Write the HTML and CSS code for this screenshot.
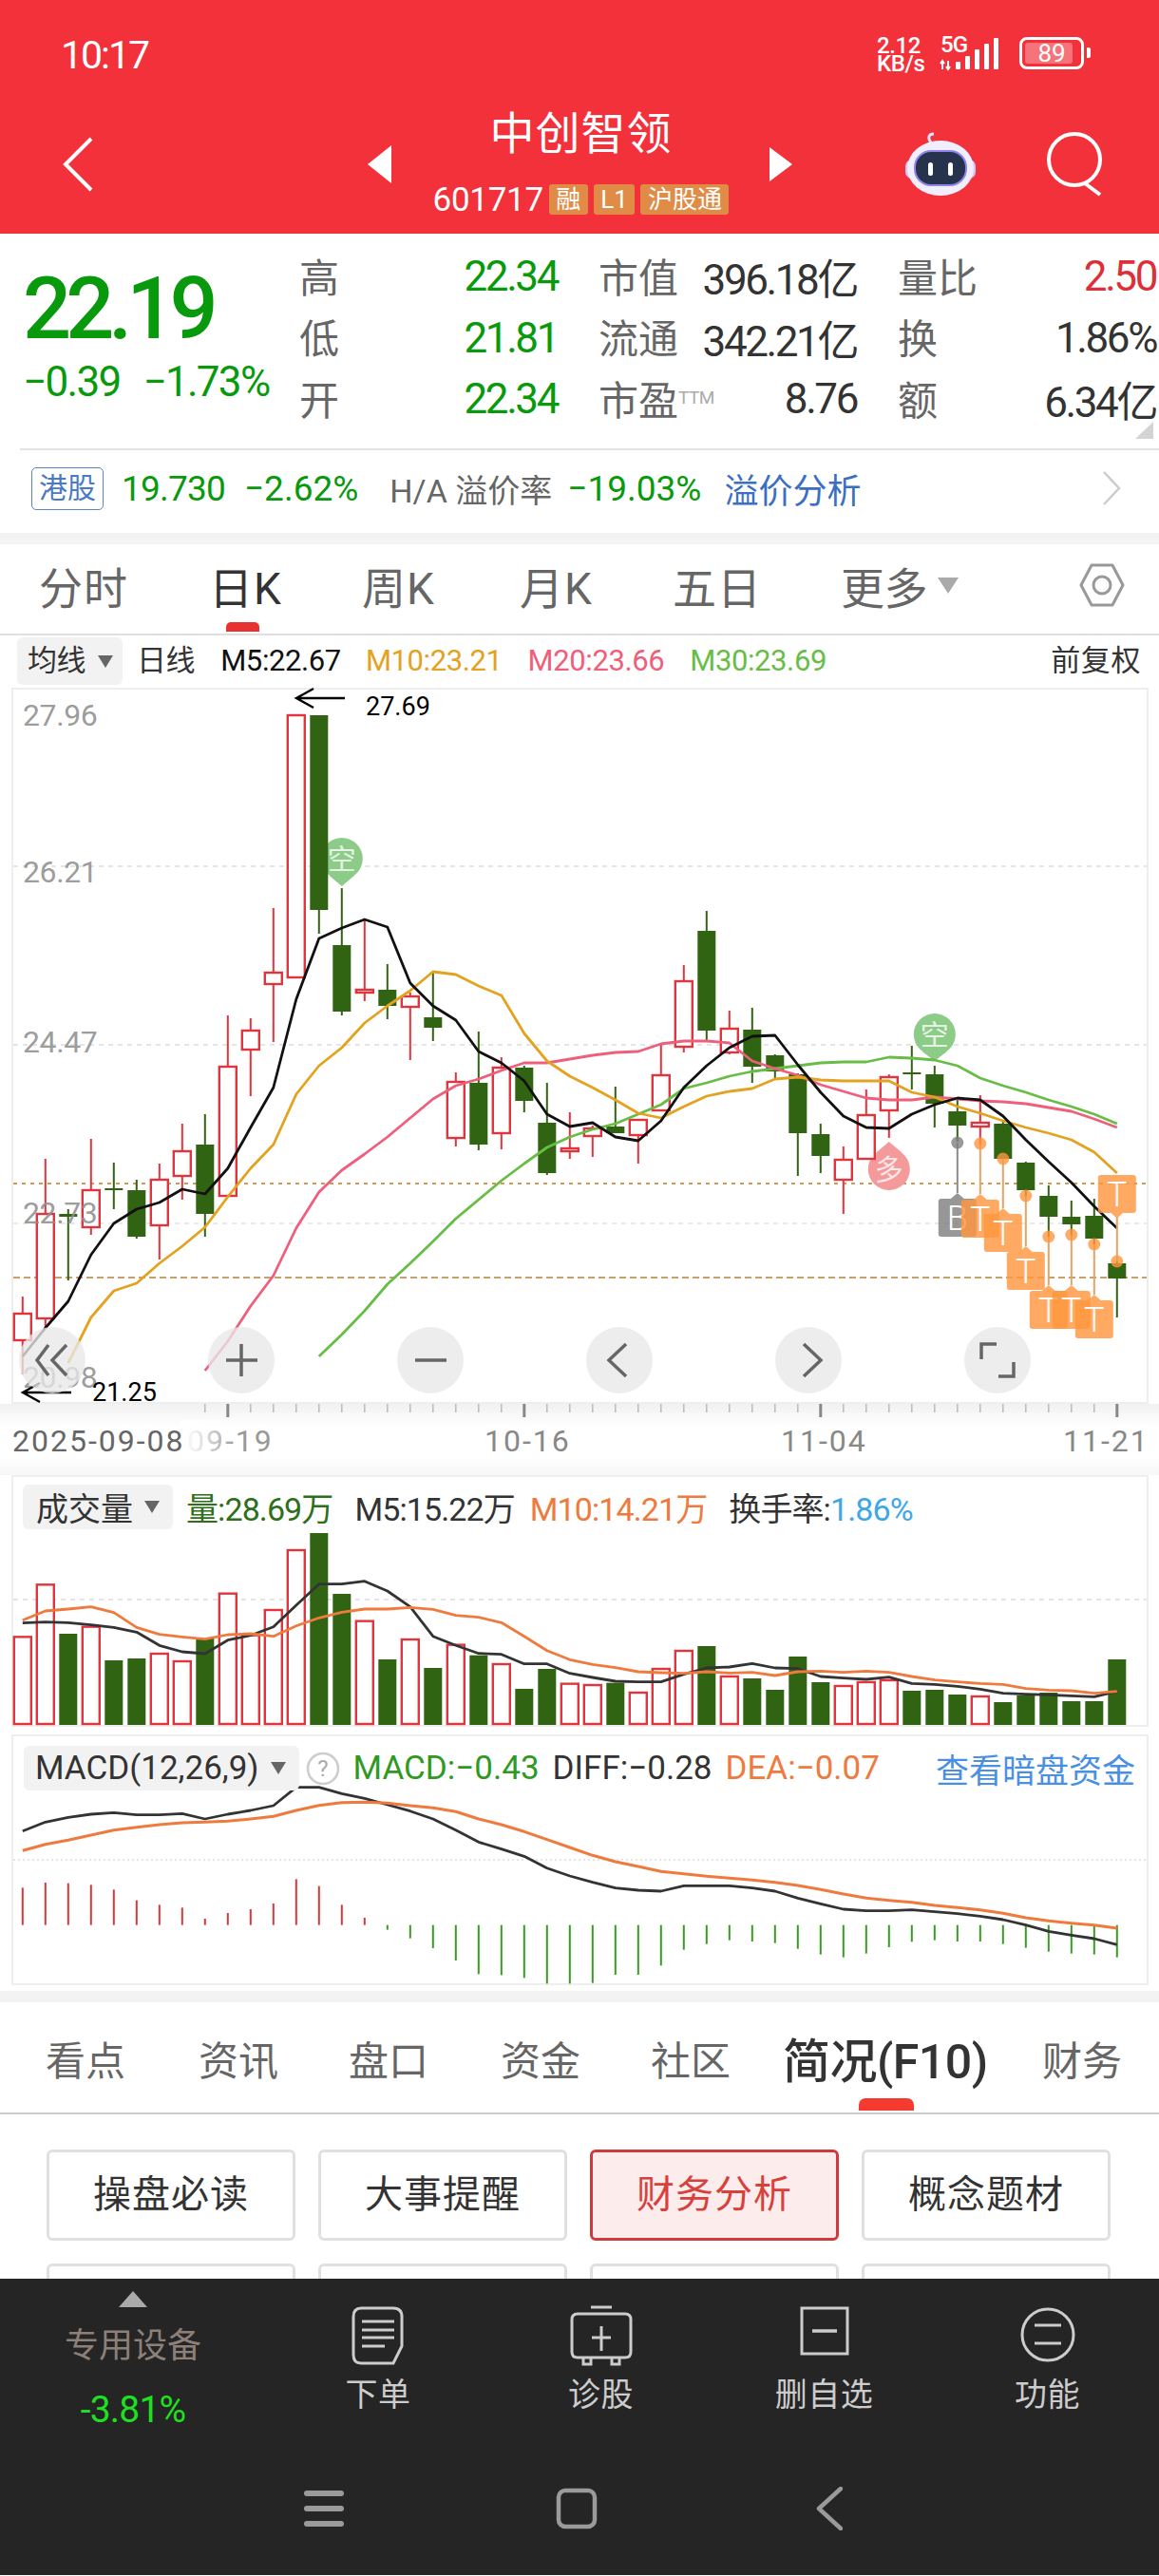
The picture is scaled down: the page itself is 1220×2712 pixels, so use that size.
FILE: index.html
```html
<!DOCTYPE html>
<html lang="zh-CN">
<head>
    <meta charset="UTF-8">
    <meta name="viewport" content="width=device-width, initial-scale=1.0">
    <title>中创智领 601717</title>
    <link rel="stylesheet" href="styles.css">
</head>
<body>
    <header class="top">
        <div class="status-bar">
            <span class="clock">10:17</span>
            <div class="status-icons">
                <div class="net-speed"><span>2.12</span><span>KB/s</span></div>
                <svg class="signal" width="70" height="44" viewBox="0 0 70 44">
                    <text class="signal-5g" x="1" y="23">5G</text>
                    <path d="M3 41V32M1 35l2-3 2 3M9 32v9M7 38l2 3 2-3" fill="none" stroke="#fff" stroke-width="2"/>
                    <rect x="17" y="33" width="5" height="8" rx="1" fill="#fff"/>
                    <rect x="27" y="27" width="5" height="14" rx="1" fill="#fff"/>
                    <rect x="37" y="20" width="5" height="21" rx="1" fill="#fff"/>
                    <rect x="47" y="14" width="5" height="27" rx="1" fill="#fff"/>
                    <rect x="57" y="8" width="5" height="33" rx="1" fill="#fff"/>
                </svg>
                <div class="battery">
                    <i class="battery-fill" style="width: 89%"></i>
                    <span>89</span>
                </div>
                <i class="battery-tip"></i>
            </div>
        </div>
        <nav class="nav">
            <svg class="nav-back" width="34" height="60" viewBox="0 0 34 60">
                <path d="M30 3L3 30l27 27" fill="none" stroke="#fff" stroke-width="4"/>
            </svg>
            <div class="nav-center">
                <svg width="26" height="40" viewBox="0 0 26 40"><path d="M25 0L0 20l25 20z" fill="#fff"/></svg>
                <div class="stock-id">
                    <div class="stock-name">中创智领</div>
                    <div class="stock-code">
                        <span class="code">601717</span>
                        <span class="tag">融</span>
                        <span class="tag">L1</span>
                        <span class="tag">沪股通</span>
                    </div>
                </div>
                <svg width="24" height="36" viewBox="0 0 24 36"><path d="M0 0l24 18L0 36z" fill="#fff"/></svg>
            </div>
            <div class="nav-right">
                <svg width="76" height="70" viewBox="0 0 76 70">
                    <path d="M29 13C24 8 25 3 31 3" fill="none" stroke="#e6e2fb" stroke-width="3"/>
                    <rect x="1" y="30" width="74" height="20" rx="7" fill="#cfc9f5"/>
                    <ellipse cx="38" cy="39" rx="35" ry="29" fill="#f1effd"/>
                    <rect x="11" y="21" width="54" height="36" rx="17" fill="#27324c" stroke="#8f83ee" stroke-width="2"/>
                    <rect x="25" y="33" width="5" height="14" rx="2.5" fill="#fff"/>
                    <rect x="46" y="33" width="5" height="14" rx="2.5" fill="#fff"/>
                </svg>
                <svg width="62" height="70" viewBox="0 0 62 70">
                    <circle cx="29" cy="30" r="27" fill="none" stroke="#fff" stroke-width="4"/>
                    <path d="M40 55l16 12" fill="none" stroke="#fff" stroke-width="4"/>
                </svg>
            </div>
        </nav>
    </header>

    <section class="quote">
        <div class="price-box">
            <div class="price">22.19</div>
            <div class="price-change"><span>−0.39</span><span>−1.73%</span></div>
        </div>
        <div class="stats">
            <div class="stat"><span class="stat-label">高</span><span class="down">22.34</span></div>
            <div class="stat"><span class="stat-label">市值</span><span>396.18亿</span></div>
            <div class="stat"><span class="stat-label">量比</span><span class="up">2.50</span></div>
            <div class="stat"><span class="stat-label">低</span><span class="down">21.81</span></div>
            <div class="stat"><span class="stat-label">流通</span><span>342.21亿</span></div>
            <div class="stat"><span class="stat-label">换</span><span>1.86%</span></div>
            <div class="stat"><span class="stat-label">开</span><span class="down">22.34</span></div>
            <div class="stat"><span class="stat-label">市盈<sup>TTM</sup></span><span>8.76</span></div>
            <div class="stat"><span class="stat-label">额</span><span>6.34亿</span></div>
        </div>
        <i class="corner-mark"></i>
    </section>

    <section class="hk-row">
        <span class="hk-tag">港股</span>
        <span class="down hk-price">19.730</span>
        <span class="down hk-change">−2.62%</span>
        <span class="hk-label">H/A 溢价率</span>
        <span class="down hk-rate">−19.03%</span>
        <span class="hk-link">溢价分析</span>
        <svg class="hk-more" width="20" height="36" viewBox="0 0 20 36">
            <path d="M2 1l16 17L2 35" fill="none" stroke="#ccc" stroke-width="2.5"/>
        </svg>
    </section>

    <div class="band"></div>

    <section class="period-tabs">
        <span>分时</span>
        <span class="period-active">日K</span>
        <span>周K</span>
        <span>月K</span>
        <span>五日</span>
        <span class="period-more">更多<i class="caret caret-large"></i></span>
        <svg width="48" height="46" viewBox="0 0 48 46">
            <path d="M13 2h22l11 21-11 21H13L2 23z" fill="none" stroke="#999" stroke-width="3" stroke-linejoin="round"/>
            <circle cx="24" cy="23" r="9" fill="none" stroke="#999" stroke-width="3"/>
        </svg>
    </section>

    <section class="ma-row">
        <span class="pill pill-ma">均线<i class="caret"></i></span>
        <span class="ma-day">日线</span>
        <span class="ma-5">M5:22.67</span>
        <span class="ma-10">M10:23.21</span>
        <span class="ma-20">M20:23.66</span>
        <span class="ma-30">M30:23.69</span>
        <span class="ma-adjust">前复权</span>
    </section>

    <section class="panel panel-kline">
        <svg id="kline" class="chart" viewBox="14 726 1193 750"></svg>
        <div class="chart-tools">
            <span class="tool"><svg viewBox="0 0 70 70"><path d="M31 19L19 35l12 16M50 19L35 35l15 16"/></svg></span>
            <span class="tool"><svg viewBox="0 0 70 70"><path d="M19 35h33M35 18v34"/></svg></span>
            <span class="tool"><svg viewBox="0 0 70 70"><path d="M19 35h33"/></svg></span>
            <span class="tool"><svg viewBox="0 0 70 70"><path d="M42 18L24 35l18 17"/></svg></span>
            <span class="tool"><svg viewBox="0 0 70 70"><path d="M30 18l18 17-18 17"/></svg></span>
            <span class="tool"><svg viewBox="0 0 70 70"><path d="M18 34V18h16M52 37v15H36"/></svg></span>
        </div>
    </section>

    <svg id="dates" class="date-axis" viewBox="0 1478 1220 75"></svg>

    <section class="panel panel-vol">
        <svg id="volume" class="chart" viewBox="14 1555 1193 261"></svg>
        <div class="legend">
            <span class="pill pill-ind">成交量<i class="caret"></i></span>
            <span class="vol-now">量:28.69万</span>
            <span class="ink">M5:15.22万</span>
            <span class="orange vol-m10">M10:14.21万</span>
            <span class="ink">换手率:<b class="rate">1.86%</b></span>
        </div>
    </section>

    <section class="panel panel-macd">
        <svg id="macd" class="chart" viewBox="14 1828 1193 260"></svg>
        <div class="legend legend-macd">
            <span class="pill pill-ind">MACD(12,26,9)<i class="caret"></i></span>
            <svg class="help" width="36" height="36" viewBox="0 0 36 36">
                <circle cx="18" cy="18" r="16" fill="#fff" stroke="#ccc" stroke-width="2.5"/>
                <text x="18" y="26" text-anchor="middle">?</text>
            </svg>
            <span class="macd-val">MACD:−0.43</span>
            <span class="ink">DIFF:−0.28</span>
            <span class="orange">DEA:−0.07</span>
            <span class="dark-pool">查看暗盘资金</span>
        </div>
    </section>

    <div class="band band-lower"></div>

    <section class="info-tabs">
        <span>看点</span>
        <span>资讯</span>
        <span>盘口</span>
        <span>资金</span>
        <span>社区</span>
        <span class="info-active">简况(F10)</span>
        <span>财务</span>
    </section>

    <section class="shortcuts">
        <a class="shortcut">操盘必读</a>
        <a class="shortcut">大事提醒</a>
        <a class="shortcut shortcut-on">财务分析</a>
        <a class="shortcut">概念题材</a>
        <a class="shortcut"></a>
        <a class="shortcut"></a>
        <a class="shortcut"></a>
        <a class="shortcut"></a>
    </section>

    <footer class="bottom">
        <div class="trade-bar">
            <div class="sector">
                <i class="sector-caret"></i>
                <span class="sector-name">专用设备</span>
                <span class="sector-rate">-3.81%</span>
            </div>
            <div class="action">
                <svg width="56" height="64" viewBox="0 0 56 64">
                    <path d="M10 3h34q9 0 9 9v31l-9 18H10q-8 0-8-9V12q0-9 8-9z"/>
                    <path d="M11 17h34M11 26h34M11 34h34M11 43h24"/>
                </svg>
                <span>下单</span>
            </div>
            <div class="action">
                <svg width="66" height="64" viewBox="0 0 66 64">
                    <path d="M22 2h22M8 9h50q6 0 6 6v34q0 6-6 6H8q-6 0-6-6V15q0-6 6-6zM14 55v7h8v-7M44 55v7h8v-7"/>
                    <path d="M33 22v26M23 34h20"/>
                </svg>
                <span>诊股</span>
            </div>
            <div class="action">
                <svg width="54" height="64" viewBox="0 0 54 64">
                    <rect x="3" y="3" width="48" height="48"/>
                    <path d="M14 27h26" stroke-width="3.5"/>
                </svg>
                <span>删自选</span>
            </div>
            <div class="action">
                <svg width="60" height="64" viewBox="0 0 60 64">
                    <circle cx="30" cy="31" r="27"/>
                    <path d="M16 21h28M16 40h28"/>
                </svg>
                <span>功能</span>
            </div>
        </div>
        <div class="nav-keys">
            <svg width="42" height="40" viewBox="0 0 42 40">
                <path d="M3 4h36M3 20h36M3 36h36" stroke-width="6"/>
            </svg>
            <svg width="44" height="44" viewBox="0 0 44 44">
                <rect x="3" y="3" width="38" height="38" rx="7" stroke-width="4.5"/>
            </svg>
            <svg width="28" height="46" viewBox="0 0 28 46">
                <path d="M26 2L3 23l23 21" stroke-width="4.5"/>
            </svg>
        </div>
    </footer>

    <script src="chart.js"></script>
</body>
</html>
```

FILE: styles.css
```css
* {
    margin: 0;
    padding: 0;
    box-sizing: border-box;
}

body {
    width: 1220px;
    height: 2712px;
    overflow: hidden;
    background: #fff;
    color: #333;
    font-family: Roboto, "Noto Sans CJK SC", sans-serif;
}

i {
    font-style: normal;
    display: block;
}

.down { color: #089a0c; }
.up { color: #dc3038; }
.ink { color: #333; }
.orange { color: #ef7a3e; }

/* red header */
.top {
    height: 246px;
    background: #f3313b;
    color: #fff;
}

.status-bar {
    height: 100px;
    padding: 37px 72px 0 64px;
    display: flex;
    justify-content: space-between;
    align-items: flex-start;
}

.clock {
    font-size: 41px;
    line-height: 42px;
    letter-spacing: -2px;
}

.status-icons {
    display: flex;
    align-items: flex-start;
    margin-top: 2px;
}

.net-speed {
    width: 66px;
    display: flex;
    flex-direction: column;
    font-size: 24px;
    line-height: 19px;
    font-weight: 500;
    letter-spacing: -0.4px;
}

.signal {
    margin-top: -7px;
    margin-right: 14px;
}

.signal-5g {
    fill: #fff;
    font-size: 24px;
    font-weight: 500;
    letter-spacing: -1px;
}

.battery {
    position: relative;
    width: 68px;
    height: 34px;
    border: 3px solid #fff;
    border-radius: 8px;
    padding: 3px;
    font-size: 26px;
    text-align: center;
    line-height: 28px;
}

.battery-fill {
    height: 100%;
    background: rgba(255, 255, 255, 0.32);
    border-radius: 3px;
}

.battery span {
    position: absolute;
    left: 0;
    right: 0;
    top: 0;
}

.battery-tip {
    width: 4px;
    height: 11px;
    margin: 11px 0 0 3px;
    background: #fff;
    border-radius: 0 2px 2px 0;
}

.nav {
    height: 146px;
    display: grid;
    grid-template-columns: 387px 447px 1fr;
    align-items: center;
}

.nav-back {
    margin-left: 66px;
}

.nav-center {
    display: flex;
    justify-content: space-between;
    align-items: center;
}

.stock-id {
    display: flex;
    flex-direction: column;
    align-items: center;
    padding-bottom: 8px;
}

.stock-name {
    font-size: 47px;
    line-height: 82px;
    letter-spacing: 1px;
}

.stock-code {
    height: 56px;
    display: flex;
    align-items: center;
    gap: 6px;
}

.code {
    font-size: 35px;
    letter-spacing: -0.3px;
}

.tag {
    height: 32px;
    padding: 0 7.5px;
    background: #e08c46;
    border-radius: 3px;
    font-size: 26px;
    line-height: 32px;
}

.nav-right {
    display: flex;
    align-items: center;
    gap: 74px;
    padding: 0 0 0 118px;
}

/* price table */
.quote {
    position: relative;
    height: 226px;
    padding: 11px 0 0 24px;
    display: flex;
}

.price-box {
    width: 291px;
    padding-top: 24px;
}

.price {
    font-size: 90px;
    line-height: 90px;
    font-weight: 500;
    letter-spacing: -6px;
    color: #089a0c;
}

.price-change {
    margin-top: 6px;
    display: flex;
    gap: 24px;
    font-size: 44px;
    line-height: 50px;
    letter-spacing: -1.7px;
    color: #089a0c;
}

.stats {
    display: grid;
    grid-template-columns: repeat(3, 272px);
    grid-auto-rows: 64.5px;
    column-gap: 43px;
    font-size: 44px;
    letter-spacing: -2.4px;
}

.stat {
    display: flex;
    justify-content: space-between;
    align-items: center;
}

.stat > span:last-child {
    padding-top: 4px;
}

.stat-label {
    color: #666;
    letter-spacing: 0;
    font-size: 42px;
}

.stat-label sup {
    font-size: 19px;
    color: #aaa;
    vertical-align: 12px;
    line-height: 0;
    letter-spacing: -0.6px;
}

.corner-mark {
    position: absolute;
    right: 6px;
    bottom: 10px;
    border-left: 19px solid transparent;
    border-bottom: 18px solid #d4d4d4;
}

/* hk quote row */
.hk-row {
    height: 89px;
    margin-left: 21px;
    border-top: 2px solid #e2e2e2;
    padding: 0 0 7px 12px;
    display: flex;
    align-items: center;
    font-size: 37px;
}

.hk-tag {
    width: 76px;
    height: 45px;
    border: 1.5px solid #5a86c6;
    border-radius: 5px;
    color: #4a7ac4;
    font-size: 30px;
    line-height: 42px;
    text-align: center;
}

.hk-price { margin-left: 19px; letter-spacing: -0.8px; }
.hk-change { margin-left: 20px; }
.hk-label { margin-left: 33px; color: #666; font-size: 34px; }
.hk-rate { margin-left: 16px; }

.hk-link {
    margin-left: 24px;
    color: #3a6fc4;
    font-size: 36px;
}

.hk-more {
    margin-left: auto;
    margin-right: 40px;
}

.band {
    height: 12px;
    background: #f3f3f3;
}

/* period tabs */
.period-tabs {
    height: 96px;
    padding: 0 0 8px 41px;
    border-bottom: 2px solid #e0e0e0;
    display: grid;
    grid-template-columns: 179px 161px 166px 161px 177px 251px 1fr;
    align-items: center;
    font-size: 46px;
    color: #666;
}

.period-tabs span {
    letter-spacing: 1px;
}

.period-active {
    position: relative;
    color: #333;
}

.period-active::after {
    content: "";
    position: absolute;
    left: 18px;
    bottom: -16px;
    width: 35px;
    height: 10px;
    background: #e83232;
    border-radius: 5px 5px 0 0;
}

.period-more {
    display: flex;
    align-items: center;
}

.period-tabs .period-more {
    letter-spacing: -0.5px;
}

.caret {
    width: 0;
    height: 0;
    border-left: 8px solid transparent;
    border-right: 8px solid transparent;
    border-top: 13px solid #666;
}

.caret-large {
    margin-left: 11px;
    border-left-width: 11px;
    border-right-width: 11px;
    border-top: 17px solid #aaa;
}

/* moving average legend */
.ma-row {
    height: 55px;
    padding: 2px 19px 0 18px;
    display: flex;
    align-items: flex-start;
    gap: 28px;
    font-size: 31px;
    line-height: 50px;
    letter-spacing: -0.4px;
}

.pill {
    background: #f2f2f2;
    border-radius: 6px;
    display: flex;
    align-items: center;
}

.pill-ma {
    width: 111px;
    height: 50px;
    padding-left: 11px;
    gap: 13px;
    margin-right: -13px;
}

.ma-5 { color: #111; margin-left: -1px; }
.ma-10 { color: #e3a21f; margin-left: -2px; }
.ma-20 { color: #ef5f7c; margin-left: -1px; }
.ma-30 { color: #68bd46; margin-left: -1px; }
.ma-adjust { margin-left: auto; letter-spacing: 0.6px; }

/* chart panels */
.panel {
    position: relative;
    margin: 0 11px 0 12px;
    border: 2px solid #eee;
}

.panel-kline { height: 754px; }
.panel-vol { height: 265px; }
.panel-macd { height: 264px; margin-top: 8px; }

.chart {
    display: block;
    width: 100%;
    height: 100%;
    overflow: visible;
}

.chart text {
    font-family: Roboto, "Noto Sans CJK SC", sans-serif;
}

.chart-tools {
    position: absolute;
    left: 6px;
    top: 671px;
    display: flex;
    gap: 129px;
}

.tool {
    width: 70px;
    height: 70px;
    border-radius: 50%;
    background: rgba(232, 232, 232, 0.78);
}

.tool svg {
    display: block;
    fill: none;
    stroke: #666;
    stroke-width: 3.5;
}

.date-axis {
    display: block;
    width: 1220px;
    height: 75px;
    background: linear-gradient(#f1f1f1, #fff 24px, #fff 55px, #f7f7f7);
}

.legend {
    position: absolute;
    left: 10px;
    top: 8px;
    right: 10px;
    display: flex;
    align-items: center;
    gap: 23px;
    font-size: 34px;
    letter-spacing: -0.9px;
    height: 47px;
}

.pill-ind {
    height: 47px;
    padding: 0 14px;
    gap: 12px;
    margin-right: -9px;
    letter-spacing: 0;
}

.vol-now { color: #2f6f1a; }
.vol-m10 { margin-left: -7px; }
.rate { font-weight: 400; color: #3ea8e6; }

.legend-macd {
    top: 10px;
    gap: 14px;
    right: 0;
    font-size: 35px;
    letter-spacing: 0;
}

.legend-macd .pill-ind {
    margin-left: 1px;
    margin-right: 0;
    padding: 0 14px 0 12px;
    gap: 12px;
    font-size: 35px;
}

.help text {
    font-family: Roboto, sans-serif;
    font-size: 24px;
    fill: #aaa;
}

.legend-macd .help {
    margin-left: -7px;
    margin-right: 0;
}

.macd-val { color: #2f9a1f; }

.dark-pool {
    margin-left: auto;
    margin-right: 12px;
    color: #4a90e2;
    font-size: 35px;
}

.band-lower {
    margin-top: 6px;
}

/* info tabs */
.info-tabs {
    height: 118px;
    padding-left: 48px;
    border-bottom: 2px solid #ccc;
    display: grid;
    grid-template-columns: 161px 158px 160px 158px 139px 273px 1fr;
    align-items: center;
    font-size: 42px;
    color: #666;
}

.info-active {
    position: relative;
    color: #333;
    font-size: 50px;
    font-weight: 500;
    letter-spacing: -0.5px;
}

.info-active::after {
    content: "";
    position: absolute;
    left: 80px;
    bottom: -20px;
    width: 58px;
    height: 13px;
    background: #f53a30;
    border-radius: 7px 7px 0 0;
}

.shortcuts {
    height: 173px;
    overflow: hidden;
    padding: 37px 47px 0 49px;
    display: grid;
    grid-template-columns: repeat(4, 262px);
    grid-auto-rows: 96px;
    gap: 24px;
}

.shortcut {
    border: 3px solid #e0e0e0;
    border-radius: 6px;
    font-size: 40px;
    text-align: center;
    line-height: 90px;
    letter-spacing: 1px;
}

.shortcut-on {
    border-color: #cf3a3c;
    background: #fdecec;
    color: #d8403c;
}

/* dark footer */
.bottom {
    height: 312px;
    background: #252525;
}

.trade-bar {
    height: 200px;
    padding: 13px 0 0 23px;
    display: grid;
    grid-template-columns: 258px 234px 235px 235px 235px;
}

.sector {
    width: 234px;
    display: flex;
    flex-direction: column;
    align-items: center;
}

.sector-caret {
    width: 0;
    height: 0;
    border-left: 15px solid transparent;
    border-right: 15px solid transparent;
    border-bottom: 17px solid #aaa;
}

.sector-name {
    margin-top: 20px;
    color: #8c8078;
    font-size: 36px;
    line-height: 42px;
}

.sector-rate {
    margin-top: 25px;
    color: #1fe01f;
    font-size: 39px;
    line-height: 42px;
    letter-spacing: -0.8px;
}

.action {
    padding-top: 15px;
    display: flex;
    flex-direction: column;
    align-items: center;
    color: #ccc;
    font-size: 34px;
    line-height: 40px;
    letter-spacing: 0.5px;
}

.action svg {
    margin-bottom: 10px;
    fill: none;
    stroke: #ccc;
    stroke-width: 3;
}

.nav-keys {
    padding: 19px 0 0 320px;
    display: grid;
    grid-template-columns: 265px 274px 1fr;
    align-items: center;
}

.nav-keys svg {
    fill: none;
    stroke: #9a9a9a;
    stroke-linecap: round;
    stroke-linejoin: round;
}
```

FILE: chart.js
```js
const SVG_NS = 'http://www.w3.org/2000/svg';
const xAt = (i) => 23.8 + 24 * i;

const RED = '#e2343c';
const GREEN = '#316412';

// [high, open, close, low, colour] in chart pixels
const candles = [
    [1365, 1383, 1411, 1447, 'r'], [1220, 1278, 1388, 1398, 'r'], [1273, 1278, 1281, 1348, 'g'],
    [1199, 1253, 1292, 1300, 'r'], [1224, 1251, 1253, 1273, 'g'], [1242, 1253, 1302, 1304, 'g'],
    [1225, 1242, 1290, 1326, 'r'], [1183, 1212, 1238, 1263, 'r'], [1173, 1205, 1278, 1302, 'g'],
    [1069, 1123, 1259, 1259, 'r'], [1072, 1085, 1105, 1154, 'r'], [956, 1024, 1036, 1097, 'r'],
    [753, 753, 1029, 1029, 'r'], [753, 753, 958, 983, 'g'], [935, 995, 1065, 1069, 'g'],
    [968, 1042, 1045, 1054, 'r'], [1015, 1042, 1059, 1073, 'g'], [1045, 1049, 1060, 1116, 'r'],
    [1023, 1071, 1082, 1096, 'g'], [1129, 1139, 1198, 1207, 'r'], [1086, 1140, 1205, 1211, 'g'],
    [1113, 1124, 1193, 1210, 'r'], [1122, 1124, 1159, 1171, 'g'], [1140, 1182, 1235, 1237, 'g'],
    [1171, 1209, 1212, 1220, 'r'], [1185, 1188, 1196, 1218, 'r'], [1144, 1186, 1193, 1193, 'g'],
    [1179, 1179, 1195, 1225, 'r'], [1099, 1132, 1169, 1169, 'r'], [1016, 1033, 1102, 1108, 'r'],
    [959, 980, 1085, 1097, 'g'], [1064, 1083, 1108, 1110, 'r'], [1061, 1084, 1123, 1140, 'g'],
    [1110, 1111, 1128, 1135, 'g'], [1130, 1131, 1193, 1238, 'g'], [1183, 1194, 1217, 1235, 'g'],
    [1207, 1221, 1242, 1278, 'r'], [1147, 1174, 1220, 1220, 'r'], [1131, 1134, 1169, 1198, 'r'],
    [1101, 1129, 1131, 1147, 'g'], [1122, 1131, 1162, 1187, 'g'], [1157, 1170, 1185, 1202, 'g'],
    [1153, 1182, 1186, 1205, 'r'], [1180, 1183, 1220, 1220, 'g'], [1223, 1224, 1253, 1260, 'g'],
    [1248, 1259, 1281, 1302, 'g'], [1264, 1281, 1289, 1302, 'g'], [1262, 1280, 1304, 1310, 'g'],
    [1327, 1330, 1346, 1387, 'g'],
];

const ma5 = [1428, 1398, 1370, 1321, 1288, 1273, 1266, 1252, 1257, 1230, 1187, 1145, 1052, 988, 977, 968, 976,
    1035, 1059, 1074, 1107, 1119, 1138, 1173, 1186, 1182, 1197, 1201, 1180, 1145, 1122, 1103, 1091, 1090, 1121,
    1150, 1175, 1187, 1188, 1173, 1163, 1156, 1158, 1175, 1200, 1223, 1245, 1270, 1293];
const ma10 = [1435, 1387, 1359, 1351, 1330, 1312, 1292, 1260, 1230, 1205, 1152, 1122, 1103, 1077, 1059, 1043,
    1023, 1026, 1038, 1048, 1088, 1117, 1133, 1145, 1158, 1172, 1177, 1165, 1154, 1149, 1146, 1136, 1134, 1137,
    1138, 1138, 1138, 1150, 1155, 1165, 1172, 1180, 1187, 1193, 1200, 1213, 1235];
const ma20 = [1443, 1412, 1375, 1343, 1293, 1255, 1232, 1215, 1197, 1177, 1157, 1143, 1136, 1127, 1119, 1119,
    1115, 1111, 1108, 1107, 1099, 1096, 1096, 1098, 1117, 1125, 1132, 1142, 1149, 1156, 1158, 1158, 1155, 1157,
    1159, 1160, 1162, 1166, 1170, 1178, 1187];
const ma30 = [1428, 1405, 1380, 1352, 1330, 1307, 1283, 1263, 1243, 1225, 1208, 1197, 1189, 1183, 1173, 1163,
    1146, 1140, 1133, 1128, 1125, 1122, 1119, 1118, 1118, 1113, 1114, 1116, 1122, 1135, 1143, 1150, 1158, 1165,
    1173, 1183];

// bar tops and averages for the volume and MACD panes, in thirds of a pixel
const volY = (v) => 1540 + v / 3;
const volTop = [550, 385, 540, 518, 624, 618, 603, 627, 555, 413, 545, 465, 276, 222, 414, 500, 621, 558, 648, 575,
    608, 636, 714, 651, 698, 702, 695, 726, 651, 594, 579, 675, 681, 717, 612, 693, 705, 693, 687, 720, 717, 732,
    738, 756, 735, 726, 753, 753, 621];
const volM5 = [506, 503, 505, 512, 520, 535, 577, 597, 603, 560, 545, 518, 450, 383, 383, 374, 405, 455, 548, 577,
    602, 605, 635, 635, 665, 678, 690, 692, 692, 668, 648, 645, 634, 648, 650, 675, 680, 684, 677, 697, 700, 706,
    715, 728, 731, 733, 736, 739, 722];
const volM10 = [497, 468, 462, 455, 473, 520, 542, 550, 557, 543, 540, 548, 515, 490, 472, 462, 462, 457, 463, 482,
    488, 505, 548, 593, 622, 637, 647, 660, 663, 665, 660, 664, 662, 672, 660, 658, 662, 658, 662, 675, 686, 692,
    697, 700, 713, 718, 720, 728, 722];

const macdY = (v) => 1820 + v / 3;
const diff = [323, 295, 280, 270, 265, 272, 272, 268, 285, 270, 258, 243, 185, 185, 205, 220, 240, 260, 285, 320,
    358, 380, 403, 440, 465, 485, 503, 510, 513, 496, 496, 496, 503, 513, 535, 553, 570, 575, 575, 572, 578, 584,
    592, 603, 620, 640, 652, 663, 682];
const dea = [385, 365, 352, 336, 320, 311, 303, 297, 295, 292, 285, 277, 258, 242, 233, 232, 235, 243, 250, 262,
    285, 303, 325, 350, 375, 400, 420, 435, 451, 458, 466, 472, 478, 485, 495, 508, 522, 535, 542, 548, 558, 565,
    572, 583, 597, 607, 614, 620, 630];
const hist = [502, 486, 488, 493, 508, 542, 556, 565, 600, 582, 570, 552, 475, 497, 556, 597, 635, 662, 693, 732,
    775, 778, 787, 805, 805, 803, 777, 777, 748, 698, 680, 668, 672, 677, 695, 713, 722, 710, 690, 673, 668, 672,
    672, 680, 692, 704, 710, 713, 722];

function el(parent, name, attrs, text) {
    const node = document.createElementNS(SVG_NS, name);
    for (const key in attrs) node.setAttribute(key, attrs[key]);
    if (text !== undefined) node.textContent = text;
    parent.appendChild(node);
    return node;
}

function polyline(svg, values, start, colour, width, toY = (v) => v) {
    const points = values.map((v, i) => `${xAt(i + start).toFixed(1)},${toY(v).toFixed(1)}`).join(' ');
    el(svg, 'polyline', { points, fill: 'none', stroke: colour, 'stroke-width': width, 'stroke-linejoin': 'round' });
}

function hLine(svg, y, colour, dash, width = 1.5) {
    el(svg, 'line', { x1: 14, x2: 1207, y1: y, y2: y, stroke: colour, 'stroke-dasharray': dash, 'stroke-width': width });
}

function drawCandle(svg, candle, i) {
    const [high, open, close, low, kind] = candle;
    const x = xAt(i);
    const colour = kind === 'r' ? RED : GREEN;
    el(svg, 'line', { x1: x, x2: x, y1: high, y2: low, stroke: colour, 'stroke-width': 2 });
    if (kind === 'r') {
        el(svg, 'rect', { x: x - 9, y: open, width: 18, height: close - open, fill: '#fff', stroke: colour, 'stroke-width': 2.4 });
    } else {
        el(svg, 'rect', { x: x - 9.5, y: open, width: 19, height: close - open, fill: colour });
    }
}

function balloon(svg, i, cy, word, colour, tipY) {
    const x = xAt(i);
    const g = el(svg, 'g', {});
    el(g, 'circle', { cx: x, cy, r: 22, fill: colour });
    el(g, 'path', { d: `M${x - 13} ${cy + (tipY > cy ? 18 : -18)}L${x} ${tipY}L${x + 13} ${cy + (tipY > cy ? 18 : -18)}z`, fill: colour });
    el(g, 'text', { x, y: cy + 11, 'text-anchor': 'middle', 'font-size': 30, fill: '#fff', 'fill-opacity': 0.8 }, word);
}

// buy / sell flag hanging under a candle, or standing above it when up is set
function flag(svg, i, ballY, top, word, colour, stem, up) {
    const x = xAt(i);
    const g = el(svg, 'g', {});
    el(g, 'line', { x1: x, x2: x, y1: ballY, y2: up ? top + 45 : top - 6, stroke: stem, 'stroke-width': 2 });
    el(g, 'circle', { cx: x, cy: ballY, r: 6.5, fill: colour, 'fill-opacity': 0.8 });
    const h = 40;
    const d = up
        ? `M${x - 17} ${top}h34q3 0 3 3v${h - 6}q0 3-3 3h-11l-6 6-6-6h-11q-3 0-3-3v-${h - 6}q0-3 3-3z`
        : `M${x - 7} ${top}l7-6 7 6h10q3 0 3 3v${h - 6}q0 3-3 3h-34q-3 0-3-3v-${h - 6}q0-3 3-3z`;
    el(g, 'path', { d, fill: colour, 'fill-opacity': 0.82 });
    el(g, 'text', { x, y: top + 33, 'text-anchor': 'middle', 'font-size': 36, 'font-weight': 300, fill: '#fff' }, word);
}

function drawKline() {
    const svg = document.getElementById('kline');
    hLine(svg, 912, '#ddd', '5 5');
    hLine(svg, 1100, '#ddd', '5 5');
    hLine(svg, 1288, '#e4e4e4', '5 5');
    hLine(svg, 1246, '#d39a55', '4 5', 2);
    hLine(svg, 1345, '#c9a06a', '7 4', 2);

    balloon(svg, 14, 904, '空', '#8ccb88', 933);
    balloon(svg, 40, 1089, '空', '#8ccb88', 1117);
    balloon(svg, 38, 1231, '多', '#f49a9a', 1202);

    candles.forEach((c, i) => drawCandle(svg, c, i));

    polyline(svg, ma30, 13, '#68bd46', 2.8);
    polyline(svg, ma20, 8, '#ef5f7c', 2.8);
    polyline(svg, ma10, 2, '#e3a21f', 2.8);
    polyline(svg, ma5, 0, '#111', 2.8);

    const labels = [['27.96', 764], ['26.21', 929], ['24.47', 1108], ['22.73', 1288], ['20.98', 1461]];
    labels.forEach(([text, y]) => {
        el(svg, 'text', { x: 24, y, 'font-size': 32, 'letter-spacing': -0.4, fill: '#8f8f8f', 'fill-opacity': 0.9 }, text);
    });

    const tan = '#e2a565';
    const orange = '#ff9640';
    flag(svg, 41, 1203, 1262, 'B', '#808080', '#8a8a8a');
    flag(svg, 42, 1204, 1263, 'T', orange, tan);
    flag(svg, 43, 1220, 1278, 'T', orange, tan);
    flag(svg, 44, 1259, 1318, 'T', orange, tan);
    flag(svg, 45, 1302, 1359, 'T', orange, tan);
    flag(svg, 46, 1300, 1359, 'T', orange, tan);
    flag(svg, 47, 1310, 1369, 'T', orange, tan);
    flag(svg, 48, 1328, 1237, 'T', orange, tan, true);

    // price extremes
    const arrow = { fill: 'none', stroke: '#000', 'stroke-width': 2.4 };
    el(svg, 'path', { d: 'M363 735H312M330 725l-18 10 18 10', ...arrow });
    el(svg, 'text', { x: 385, y: 753, 'font-size': 27, fill: '#000' }, '27.69');
    el(svg, 'path', { d: 'M75 1466H24M42 1456l-18 10 18 10', ...arrow });
    el(svg, 'text', { x: 97, y: 1475, 'font-size': 27, fill: '#000' }, '21.25');
}

function drawDates() {
    const svg = document.getElementById('dates');
    for (let i = 8; i < 49; i++) {
        el(svg, 'line', { x1: xAt(i), x2: xAt(i), y1: 1478, y2: 1487, stroke: '#bbb', 'stroke-width': 1.5 });
    }
    [9, 22, 35, 48].forEach((i) => {
        el(svg, 'line', { x1: xAt(i), x2: xAt(i), y1: 1478, y2: 1492, stroke: '#888', 'stroke-width': 3 });
    });

    const defs = el(svg, 'defs', {});
    const fade = el(defs, 'linearGradient', { id: 'dateFade' });
    el(fade, 'stop', { offset: 0, 'stop-color': '#fff' });
    el(fade, 'stop', { offset: 0.25, 'stop-color': '#fff', 'stop-opacity': 0.85 });
    el(fade, 'stop', { offset: 1, 'stop-color': '#fff', 'stop-opacity': 0 });

    const style = { y: 1528, 'font-size': 32, 'letter-spacing': 2 };
    el(svg, 'text', { ...style, x: 197, fill: '#999' }, '09-19');
    el(svg, 'rect', { x: 190, y: 1495, width: 60, height: 40, fill: 'url(#dateFade)' });
    el(svg, 'text', { ...style, x: 13, fill: '#666' }, '2025-09-08');
    el(svg, 'text', { ...style, x: 510, fill: '#888' }, '10-16');
    el(svg, 'text', { ...style, x: 822, fill: '#888' }, '11-04');
    el(svg, 'text', { ...style, x: 1119, fill: '#888' }, '11-21');
}

function drawVolume() {
    const svg = document.getElementById('volume');
    hLine(svg, 1684, '#ddd', '5 5');
    volTop.forEach((v, i) => {
        const x = xAt(i);
        const y = volY(v);
        if (candles[i][4] === 'r') {
            el(svg, 'rect', { x: x - 9, y, width: 18, height: 1815 - y, fill: '#fff', stroke: RED, 'stroke-width': 2.4 });
        } else {
            el(svg, 'rect', { x: x - 9.5, y, width: 19, height: 1816 - y, fill: GREEN });
        }
    });
    polyline(svg, volM5, 0, '#333', 2.8, volY);
    polyline(svg, volM10, 0, '#ef7a3e', 2.8, volY);
}

function drawMacd() {
    const svg = document.getElementById('macd');
    hLine(svg, 1958, '#ddd', '2 3');
    hist.forEach((v, i) => {
        const y = macdY(v);
        const zero = macdY(620);
        el(svg, 'line', { x1: xAt(i), x2: xAt(i), y1: zero, y2: y, stroke: v < 620 ? '#d03a3a' : '#3a9a22', 'stroke-width': 2 });
    });
    polyline(svg, diff, 0, '#333', 2.8, macdY);
    polyline(svg, dea, 0, '#ef7a3e', 3, macdY);
}

drawKline();
drawDates();
drawVolume();
drawMacd();
```
